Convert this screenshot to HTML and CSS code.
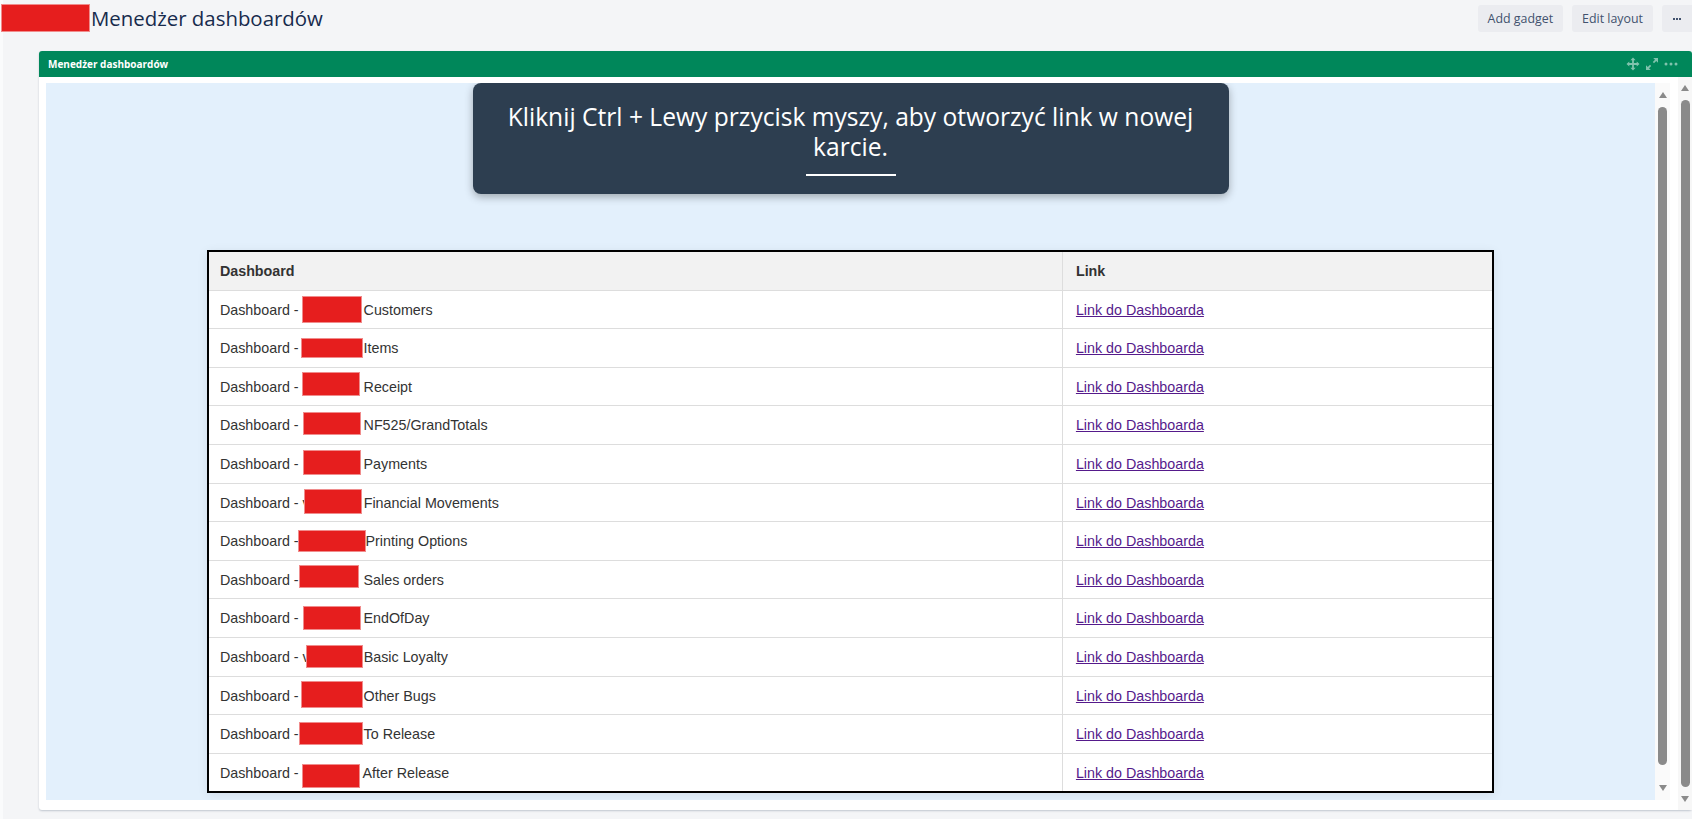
FILE: index.html
```html
<!DOCTYPE html>
<html lang="pl">
<head>
<meta charset="utf-8">
<title>Menedżer dashboardów</title>
<link rel="stylesheet" href="styles.css">
</head>
<body>
<div class="page">
  <header class="topbar">
    <div class="heading">
      <span class="redact-title"></span>
      <h1 class="title">Menedżer dashboardów</h1>
    </div>
    <div class="actions">
      <button class="btn">Add gadget</button>
      <button class="btn">Edit layout</button>
      <button class="btn btn-more" aria-label="More"><svg width="8" height="2" viewBox="0 0 8 2"><rect x="0" y="0" width="2" height="2" fill="currentColor"/><rect x="3" y="0" width="2" height="2" fill="currentColor"/><rect x="6" y="0" width="2" height="2" fill="currentColor"/></svg></button>
    </div>
  </header>

  <section class="gadget">
    <div class="gadget-head">
      <span class="gadget-title">Menedżer dashboardów</span>
      <div class="gadget-icons">
        <svg width="14" height="14" viewBox="0 0 14 14"><path d="M7 0.5 L9.6 3.3 H7.9 V6.1 H10.7 V4.4 L13.5 7 L10.7 9.6 V7.9 H7.9 V10.7 H9.6 L7 13.5 L4.4 10.7 H6.1 V7.9 H3.3 V9.6 L0.5 7 L3.3 4.4 V6.1 H6.1 V3.3 H4.4 Z" fill="currentColor"/></svg>
        <svg width="14" height="14" viewBox="0 0 14 14"><path d="M8.2 1 H13 V5.8 L11.2 4 L9 6.2 L7.8 5 L10 2.8 Z M5.8 13 H1 V8.2 L2.8 10 L5 7.8 L6.2 9 L4 11.2 Z" fill="currentColor"/></svg>
        <svg width="14" height="14" viewBox="0 0 14 14"><circle cx="2" cy="7" r="1.5" fill="currentColor"/><circle cx="7" cy="7" r="1.5" fill="currentColor"/><circle cx="12" cy="7" r="1.5" fill="currentColor"/></svg>
      </div>
    </div>
    <div class="gadget-body">
      <div class="frame">
        <div class="content">
          <div class="tip">
            <p class="tip-text">Kliknij Ctrl + Lewy przycisk myszy, aby otworzyć link w nowej<br>karcie.</p>
            <div class="tip-bar"></div>
          </div>
          <table class="dash-table">
            <thead>
              <tr><th class="col-name">Dashboard</th><th>Link</th></tr>
            </thead>
            <tbody>
              <tr><td>Dashboard - <span class="rd r1"></span>Customers</td><td><a href="#">Link do Dashboarda</a></td></tr>
              <tr><td>Dashboard - <span class="rd r2"></span>Items</td><td><a href="#">Link do Dashboarda</a></td></tr>
              <tr><td>Dashboard - <span class="rd r3"></span>Receipt</td><td><a href="#">Link do Dashboarda</a></td></tr>
              <tr><td>Dashboard - <span class="rd r4"></span>NF525/GrandTotals</td><td><a href="#">Link do Dashboarda</a></td></tr>
              <tr><td>Dashboard - <span class="rd r5"></span>Payments</td><td><a href="#">Link do Dashboarda</a></td></tr>
              <tr><td>Dashboard - v<span class="rd r6"></span>Financial Movements</td><td><a href="#">Link do Dashboarda</a></td></tr>
              <tr><td>Dashboard - <span class="rd r7"></span>Printing Options</td><td><a href="#">Link do Dashboarda</a></td></tr>
              <tr><td>Dashboard - <span class="rd r8"></span>Sales orders</td><td><a href="#">Link do Dashboarda</a></td></tr>
              <tr><td>Dashboard - <span class="rd r9"></span>EndOfDay</td><td><a href="#">Link do Dashboarda</a></td></tr>
              <tr><td>Dashboard - v<span class="rd r10"></span>Basic Loyalty</td><td><a href="#">Link do Dashboarda</a></td></tr>
              <tr><td>Dashboard - <span class="rd r11"></span>Other Bugs</td><td><a href="#">Link do Dashboarda</a></td></tr>
              <tr><td>Dashboard - <span class="rd r12"></span>To Release</td><td><a href="#">Link do Dashboarda</a></td></tr>
              <tr><td>Dashboard - <span class="rd r13"></span>After Release</td><td><a href="#">Link do Dashboarda</a></td></tr>
            </tbody>
          </table>
        </div>
        <div class="sb sb-inner">
          <span class="arr arr-up"></span>
          <span class="thumb"></span>
          <span class="arr arr-down"></span>
        </div>
      </div>
      <div class="sb sb-outer">
        <span class="arr arr-up"></span>
        <span class="thumb"></span>
        <span class="arr arr-down"></span>
      </div>
    </div>
  </section>
</div>
</body>
</html>
```

FILE: styles.css
```css
* { box-sizing: border-box; }

html, body {
  margin: 0;
  padding: 0;
}

body {
  background: linear-gradient(to right, #fafbfc 3px, #f4f5f7 3px);
  font-family: "Open Sans", "Noto Sans", sans-serif;
  overflow: hidden;
}

.page {
  width: 1692px;
  height: 819px;
}

/* ---------- top bar ---------- */
.topbar {
  display: flex;
  justify-content: space-between;
  align-items: flex-start;
  height: 51px;
  padding-left: 1px;
}

.heading {
  display: flex;
  align-items: flex-start;
}

.redact-title {
  display: block;
  width: 89px;
  height: 28px;
  margin-top: 4px;
  background: #e61e1e;
  border: 1px solid #f08c8c;
}

.title {
  margin: 3px 0 0 1px;
  font-size: 20.4px;
  font-weight: 400;
  line-height: 31px;
  color: #172b4d;
}

.actions {
  display: flex;
  gap: 9px;
  margin-top: 5px;
  margin-right: -2px;
}

.btn {
  height: 27px;
  padding: 0 10px;
  border: 0;
  border-radius: 3px;
  background: #ebecf0;
  color: #42526e;
  font-family: "Open Sans", "Noto Sans", sans-serif;
  font-size: 12.4px;
  line-height: 27px;
}

.btn-more {
  width: 32px;
  padding: 0 0 0 11px;
  display: flex;
  align-items: center;
}

/* ---------- gadget ---------- */
.gadget {
  margin-left: 39px;
  height: 759px;
  background: #fff;
  border-radius: 3px;
  box-shadow: 0 1px 2px rgba(9, 30, 66, 0.22);
}

.gadget-head {
  height: 26px;
  display: flex;
  align-items: center;
  justify-content: space-between;
  padding: 0 14px 0 9px;
  background: #00875a;
  border-radius: 3px 3px 0 0;
}

.gadget-title {
  color: #fff;
  font-size: 10px;
  font-weight: 700;
}

.gadget-icons {
  display: flex;
  gap: 5px;
  color: rgba(255, 255, 255, 0.5);
}

.gadget-icons svg { display: block; }

.gadget-body {
  display: flex;
  height: 733px;
  padding: 6px 0 0 7px;
}

.frame {
  display: flex;
  width: 1624px;
  height: 717px;
}

.content {
  flex: 1;
  background: #e3f0fc;
  overflow: hidden;
}

/* ---------- scrollbars ---------- */
.sb {
  display: flex;
  flex-direction: column;
  align-items: center;
}

.sb-inner {
  width: 15px;
  background: #fafafa;
  padding: 9px 0;
}

.sb-outer {
  width: 14px;
  margin-left: 8px;
  margin-top: -6px;
  height: 733px;
  background: #f7f7f7;
  padding: 8px 0;
}

.arr {
  display: block;
  width: 0;
  height: 0;
  border-left: 4.5px solid transparent;
  border-right: 4.5px solid transparent;
}

.arr-up { border-bottom: 6px solid #8a8a8a; }
.arr-down { border-top: 6px solid #8a8a8a; }

.thumb {
  display: block;
  width: 9px;
  flex: 1;
  border-radius: 5px;
  background: #8a8a8a;
}

.sb-inner .thumb { margin: 9px 0 20px; }
.sb-outer .thumb { margin: 9px 0; }

/* ---------- tooltip ---------- */
.tip {
  width: 756px;
  margin: 0 auto;
  padding: 19px 10px 18px;
  background: #2d3e50;
  border-radius: 8px;
  box-shadow: 0 3px 8px rgba(0, 0, 0, 0.3);
  text-align: center;
  color: #fff;
}

.tip-text {
  margin: 0;
  font-size: 24.6px;
  line-height: 30px;
  white-space: nowrap;
}

.tip-bar {
  width: 90px;
  height: 2px;
  margin: 12px auto 0;
  background: #fff;
}

/* ---------- table ---------- */
.dash-table {
  width: 80%;
  margin: 56px auto 0;
  table-layout: fixed;
  border: 2px solid #000;
  border-collapse: separate;
  border-spacing: 0;
  background: #fff;
  box-shadow: 0 2px 10px rgba(0, 0, 0, 0.08);
  font-family: "Liberation Sans", Arial, sans-serif;
  font-size: 14.3px;
  color: #333;
}

.dash-table th,
.dash-table td {
  padding: 11px 11px 9px;
  line-height: 17.6px;
  text-align: left;
  border-bottom: 1px solid #ddd;
  white-space: nowrap;
}

.dash-table th:last-child,
.dash-table td:last-child {
  padding-left: 13px;
}

.dash-table th {
  background: #f2f2f2;
  font-weight: 700;
}

.dash-table .col-name { width: 854px; }

.dash-table th:first-child,
.dash-table td:first-child {
  border-right: 1px solid #ddd;
}

.dash-table tbody tr:last-child td { border-bottom: 0; }

.dash-table a {
  color: #551a8b;
  text-decoration: underline;
}

/* redaction boxes */
.rd {
  display: inline-block;
  position: relative;
  vertical-align: middle;
  margin-top: -9px;
  margin-bottom: -9px;
  background: #e61e1e;
  border: 1px solid #f08c8c;
}

.r1  { width: 60px; height: 27px; margin-left: -1px; margin-right: 2px; top: -1px; }
.r2  { width: 62px; height: 20px; margin-left: -2px; margin-right: 1px; top: -1px; }
.r3  { width: 58px; height: 24px; margin-left: -1px; margin-right: 4px; top: -4px; }
.r4  { width: 58px; height: 23px; margin-left: 0;    margin-right: 3px; top: -3px; }
.r5  { width: 58px; height: 25px; margin-left: 0;    margin-right: 3px; top: -3px; }
.r6  { width: 58px; height: 25px; margin-left: -6px; margin-right: 2px; top: -2px; }
.r7  { width: 68px; height: 22px; margin-left: -5px; margin-right: 0;   top: -1px; }
.r8  { width: 60px; height: 23px; margin-left: -4px; margin-right: 5px; top: -4px; }
.r9  { width: 58px; height: 24px; margin-left: 0;    margin-right: 3px; top: -2px; }
.r10 { width: 57px; height: 23px; margin-left: -4px; margin-right: 1px; top: -2px; }
.r11 { width: 62px; height: 27px; margin-left: -2px; margin-right: 1px; top: -2px; }
.r12 { width: 64px; height: 23px; margin-left: -4px; margin-right: 1px; top: -2px; }
.r13 { width: 58px; height: 24px; margin-left: -1px; margin-right: 3px; top: 2px; }
```
